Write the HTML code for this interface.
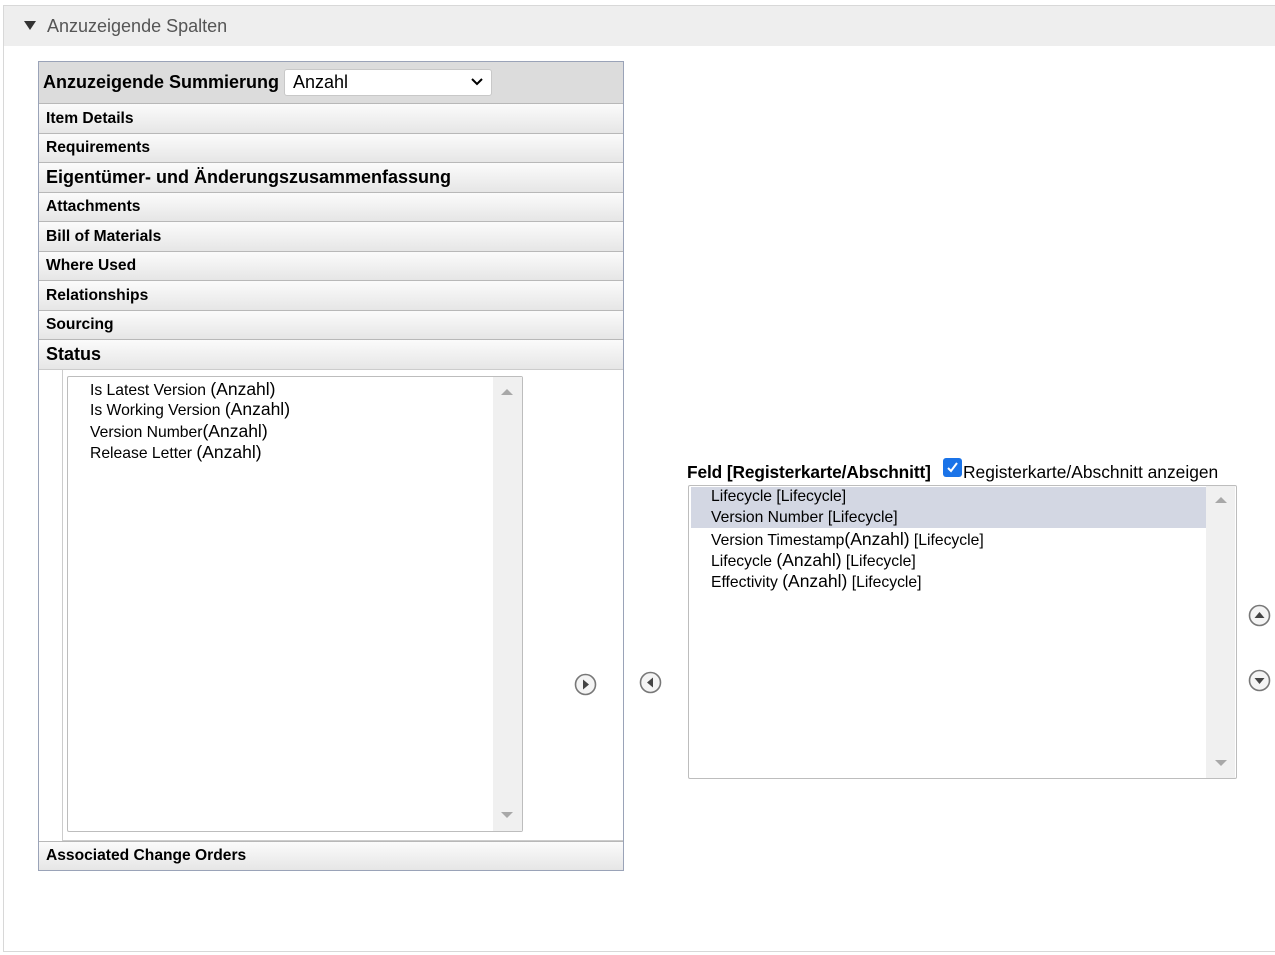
<!DOCTYPE html>
<html><head><meta charset="utf-8"><style>
*{box-sizing:border-box;margin:0;padding:0}
body{width:1275px;height:955px;background:#fff;font-family:"Liberation Sans",Arial,sans-serif;position:relative;overflow:hidden;color:#000}
.a{position:absolute}
.outer{left:3px;top:5px;width:1290px;height:947px;border:1px solid #d8d8d8;background:#fff}
.hdr{left:4px;top:6px;width:1275px;height:40px;background:#eeeeee}
.row{position:absolute;left:39px;width:584px;background:linear-gradient(#fbfbfb,#e6e6e6);border-top:1px solid #b8b8b8;font-weight:bold;font-size:15.6px;padding-left:7px;display:flex;align-items:center}
.lb{background:#fff;border:1px solid #bdbdbd;border-radius:2px}
.sb{position:absolute;background:#f0f0f0;width:29px}
.it{position:absolute;font-size:15.7px;white-space:nowrap}
.big{font-size:17.5px}
</style></head><body>
<div class="a outer"></div>
<div class="a hdr"></div>
<div class="a" style="left:24px;top:21px;width:0;height:0;border-left:6px solid transparent;border-right:6px solid transparent;border-top:9px solid #333"></div>
<div class="a" style="left:47px;top:16px;font-size:18px;color:#555">Anzuzeigende Spalten</div>

<div class="a" style="left:38px;top:61px;width:586px;height:810px;border:1px solid #9aa3b8;background:#fff"></div>
<div class="a" style="left:39px;top:62px;width:584px;height:41px;background:#dcdcdc"></div>
<div class="a" style="left:43px;top:72px;font-weight:bold;font-size:18px">Anzuzeigende Summierung</div>
<div class="a" style="left:284px;top:69px;width:208px;height:27px;background:#fff;border:1px solid #c8c8c8;border-radius:3px;font-size:18px;padding:2px 8px">Anzahl</div>
<svg class="a" style="left:470px;top:76px" width="14" height="12"><path d="M2 3 L7 8 L12 3" stroke="#000" stroke-width="2" fill="none"/></svg>

<div class="row" style="top:103px;height:30px">Item Details</div>
<div class="row" style="top:133px;height:29px">Requirements</div>
<div class="row" style="top:162px;height:30px;font-size:18px">Eigentümer- und Änderungszusammenfassung</div>
<div class="row" style="top:192px;height:29px">Attachments</div>
<div class="row" style="top:221px;height:30px">Bill of Materials</div>
<div class="row" style="top:251px;height:29px">Where Used</div>
<div class="row" style="top:280px;height:30px">Relationships</div>
<div class="row" style="top:310px;height:29px">Sourcing</div>
<div class="row" style="top:339px;height:30px;font-size:18px">Status</div>
<div class="a" style="left:39px;top:369px;width:584px;height:472px;border-top:1px solid #ccc;background:#fff"></div>
<div class="a" style="left:62px;top:369px;width:561px;height:472px;border-left:1px solid #ccc;border-bottom:1px solid #ccc"></div>
<div class="a lb" style="left:67px;top:376px;width:456px;height:456px"></div>
<div class="sb" style="left:493px;top:377px;height:454px"></div>
<svg class="a" style="left:500px;top:387px" width="14" height="10"><path d="M1 8 L7 2 L13 8Z" fill="#a8a8a8"/></svg>
<svg class="a" style="left:500px;top:810px" width="14" height="10"><path d="M1 2 L7 8 L13 2Z" fill="#a8a8a8"/></svg>
<div class="it" style="left:90px;top:379px">Is Latest Version <span class="big">(Anzahl)</span></div>
<div class="it" style="left:90px;top:399px">Is Working Version <span class="big">(Anzahl)</span></div>
<div class="it" style="left:90px;top:421px">Version Number<span class="big">(Anzahl)</span></div>
<div class="it" style="left:90px;top:442px">Release Letter <span class="big">(Anzahl)</span></div>
<div class="row" style="top:841px;height:29px">Associated Change Orders</div>

<svg class="a" style="left:574px;top:673px" width="23" height="23"><circle cx="11.5" cy="11.5" r="10" fill="#f4f4f4" stroke="#777" stroke-width="1.6"/><path d="M9 6.5 L15 11.5 L9 16.5Z" fill="#444"/></svg>
<svg class="a" style="left:639px;top:671px" width="23" height="23"><circle cx="11.5" cy="11.5" r="10" fill="#f4f4f4" stroke="#777" stroke-width="1.6"/><path d="M14 6.5 L8 11.5 L14 16.5Z" fill="#444"/></svg>
<svg class="a" style="left:1248px;top:604px" width="23" height="23"><circle cx="11.5" cy="11.5" r="10" fill="#f4f4f4" stroke="#777" stroke-width="1.6"/><path d="M6.5 14 L11.5 8 L16.5 14Z" fill="#444"/></svg>
<svg class="a" style="left:1248px;top:669px" width="23" height="23"><circle cx="11.5" cy="11.5" r="10" fill="#f4f4f4" stroke="#777" stroke-width="1.6"/><path d="M6.5 9 L11.5 15 L16.5 9Z" fill="#444"/></svg>

<div class="a" style="left:687px;top:462px;font-size:17.3px;white-space:nowrap;letter-spacing:-0.1px"><b>Feld [Registerkarte/Abschnitt]</b></div>
<div class="a" style="left:943px;top:458px;width:19px;height:19px;background:#1a73e8;border-radius:3px"></div>
<svg class="a" style="left:945px;top:460px" width="15" height="15"><path d="M3 8 L6 11 L12 3" stroke="#fff" stroke-width="2" fill="none"/></svg>
<div class="a" style="left:963px;top:462px;font-size:17.4px;white-space:nowrap">Registerkarte/Abschnitt anzeigen</div>
<div class="a lb" style="left:688px;top:485px;width:549px;height:294px"></div>
<div class="a" style="left:691px;top:487px;width:515px;height:41px;background:#d3d7e3"></div>
<div class="sb" style="left:1206px;top:486px;height:292px"></div>
<svg class="a" style="left:1214px;top:495px" width="14" height="10"><path d="M1 8 L7 2 L13 8Z" fill="#a8a8a8"/></svg>
<svg class="a" style="left:1214px;top:758px" width="14" height="10"><path d="M1 2 L7 8 L13 2Z" fill="#a8a8a8"/></svg>
<div class="it" style="left:711px;top:488px">Lifecycle [Lifecycle]</div>
<div class="it" style="left:711px;top:509px">Version Number [Lifecycle]</div>
<div class="it" style="left:711px;top:529px">Version Timestamp<span class="big">(Anzahl)</span> [Lifecycle]</div>
<div class="it" style="left:711px;top:550px">Lifecycle <span class="big">(Anzahl)</span> [Lifecycle]</div>
<div class="it" style="left:711px;top:571px">Effectivity <span class="big">(Anzahl)</span> [Lifecycle]</div>
</body></html>
